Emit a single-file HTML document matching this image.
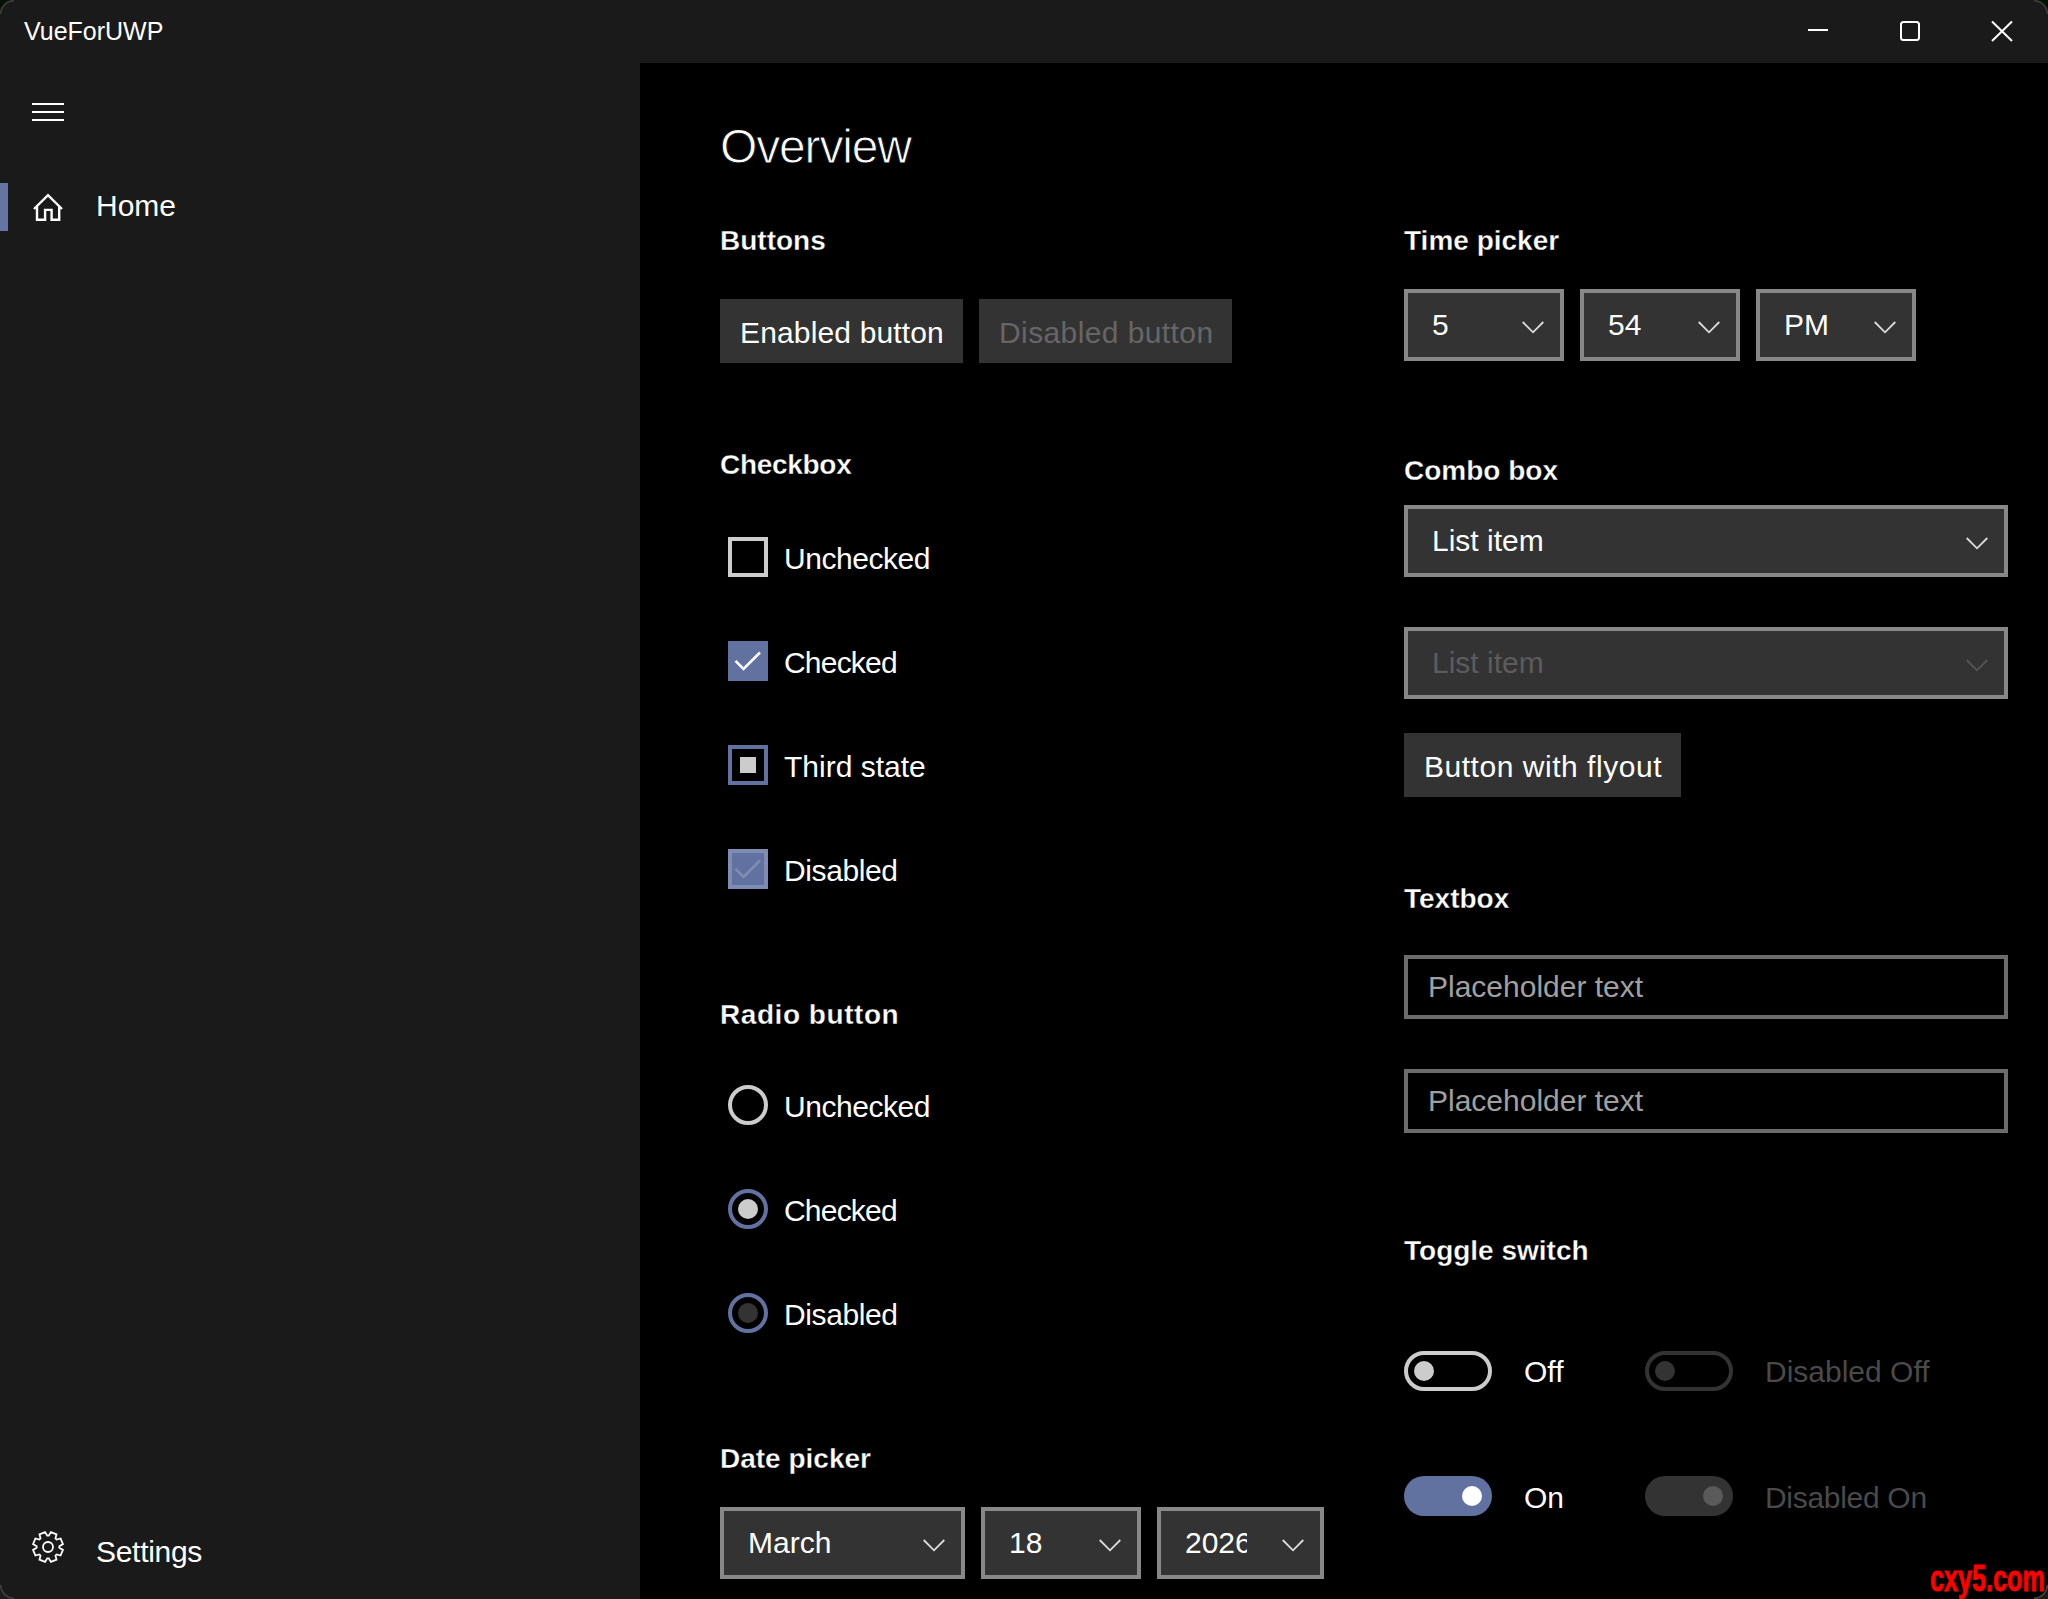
<!DOCTYPE html>
<html><head><meta charset="utf-8">
<style>
*{margin:0;padding:0;box-sizing:border-box}
html,body{width:2048px;height:1599px;overflow:hidden;background:#0a140a}
body{position:relative;font-family:"Liberation Sans",sans-serif;color:#fff}
#win{position:absolute;left:0;top:0;width:2048px;height:1599px;background:#1a1a1a;overflow:hidden}
.a{position:absolute;white-space:pre;line-height:1}
.t30{font-size:30px}
.h{font-size:28px;font-weight:700;-webkit-text-stroke:0.3px #000}
#content{position:absolute;left:640px;top:63px;width:1408px;height:1536px;background:#000}
.btn{position:absolute;background:#333;height:64px}
.pick{position:absolute;background:#333;border:4px solid #888;height:72px}
.chev{position:absolute;width:24px;height:14px}
.cb{position:absolute;width:40px;height:40px;left:728px}
.rb{position:absolute;width:40px;height:40px;left:728px;border-radius:50%;border:4px solid #ccc}
.tb{position:absolute;left:1404px;width:604px;height:64px;border:4px solid #6c6c6c;background:#000}
.tg{position:absolute;width:88px;height:40px;border-radius:20px}
.knob{position:absolute;width:20px;height:20px;border-radius:50%}
</style></head><body>
<div id="win">
  <!-- title bar -->
  <div class="a" style="left:24px;top:19px;font-size:25px">VueForUWP</div>
  <svg style="position:absolute;left:1790px;top:10px" width="240" height="44" viewBox="1790 10 240 44">
    <line x1="1808" y1="30" x2="1828" y2="30" stroke="#fff" stroke-width="2"/>
    <rect x="1901" y="22" width="18" height="18" rx="2.5" fill="none" stroke="#fff" stroke-width="2"/>
    <path d="M1992 21.5 L2012 41 M2012 21.5 L1992 41" stroke="#fff" stroke-width="2" fill="none"/>
  </svg>
  <!-- sidebar -->
  <svg style="position:absolute;left:28px;top:96px" width="40" height="32" viewBox="28 96 40 32">
    <path d="M32 104 H64 M32 112 H64 M32 120 H64" stroke="#fff" stroke-width="2" fill="none"/>
  </svg>
  <div style="position:absolute;left:0;top:183px;width:8px;height:48px;background:#6674a4"></div>
  <svg style="position:absolute;left:28px;top:186px" width="40" height="40" viewBox="28 186 40 40">
    <path d="M34 209 L48 195.2 L62 209" stroke="#fff" stroke-width="2.4" fill="none" stroke-linejoin="miter"/>
    <path d="M37 206.5 V219.8 H45.1 V209.9 H51.6 V219.8 H59.2 V206.5" stroke="#fff" stroke-width="2.4" fill="none"/>
  </svg>
  <div class="a t30" style="left:96px;top:191px">Home</div>
  <svg style="position:absolute;left:28px;top:1527px" width="40" height="40" viewBox="28 1527 40 40">
    <path d="M59.37 1547.80 L62.92 1549.90 L60.60 1555.50 L56.60 1554.48 L55.48 1555.60 L56.50 1559.60 L50.90 1561.92 L48.80 1558.37 L47.20 1558.37 L45.10 1561.92 L39.50 1559.60 L40.52 1555.60 L39.40 1554.48 L35.40 1555.50 L33.08 1549.90 L36.63 1547.80 L36.63 1546.20 L33.08 1544.10 L35.40 1538.50 L39.40 1539.52 L40.52 1538.40 L39.50 1534.40 L45.10 1532.08 L47.20 1535.63 L48.80 1535.63 L50.90 1532.08 L56.50 1534.40 L55.48 1538.40 L56.60 1539.52 L60.60 1538.50 L62.92 1544.10 L59.37 1546.20 Z" stroke="#fff" stroke-width="1.8" fill="none" stroke-linejoin="miter"/><circle cx="48" cy="1547" r="5" stroke="#fff" stroke-width="1.8" fill="none"/>
  </svg>
  <div class="a t30" style="left:96px;top:1537px;letter-spacing:-0.3px">Settings</div>

  <!-- content -->
  <div id="content"></div>
  <div class="a" style="left:720px;top:123px;font-size:48px;letter-spacing:-1.15px;-webkit-text-stroke:0.9px #000">Overview</div>

  <!-- Buttons -->
  <div class="a h" style="left:720px;top:227px">Buttons</div>
  <div class="btn" style="left:720px;top:299px;width:243px"></div>
  <div class="a t30" style="left:740px;top:318px;letter-spacing:0.15px">Enabled button</div>
  <div class="btn" style="left:979px;top:299px;width:253px"></div>
  <div class="a t30" style="left:999px;top:318px;color:#666;letter-spacing:0.4px">Disabled button</div>

  <!-- Checkbox -->
  <div class="a h" style="left:720px;top:451px;letter-spacing:-0.3px">Checkbox</div>
  <div class="cb" style="top:537px;border:4px solid #ccc"></div>
  <div class="a t30" style="left:784px;top:544px;letter-spacing:-0.45px">Unchecked</div>
  <div class="cb" style="top:641px;background:#6272a0">
    <svg width="40" height="40" viewBox="0 0 40 40" style="position:absolute;left:0;top:0"><path d="M7.5 19.8 L15.5 28 L32 11.5" stroke="#fff" stroke-width="2.6" fill="none"/></svg>
  </div>
  <div class="a t30" style="left:784px;top:648px;letter-spacing:-0.8px">Checked</div>
  <div class="cb" style="top:745px;border:4px solid #6272a0">
    <div style="position:absolute;left:8px;top:8px;width:16px;height:16px;background:#ccc"></div>
  </div>
  <div class="a t30" style="left:784px;top:752px">Third state</div>
  <div class="cb" style="top:849px;background:#6272a0;border:4px solid #7f8cb4">
    <svg width="40" height="40" viewBox="0 0 40 40" style="position:absolute;left:-4px;top:-4px"><path d="M7.5 19.8 L15.5 28 L32 11.5" stroke="#7f8cb4" stroke-width="2.6" fill="none"/></svg>
  </div>
  <div class="a t30" style="left:784px;top:856px;letter-spacing:-0.4px">Disabled</div>

  <!-- Radio -->
  <div class="a h" style="left:720px;top:1001px;letter-spacing:0.55px">Radio button</div>
  <div class="rb" style="top:1085px"></div>
  <div class="a t30" style="left:784px;top:1092px;letter-spacing:-0.45px">Unchecked</div>
  <div class="rb" style="top:1189px;border-color:#6272a0"><div class="knob" style="left:6px;top:6px;background:#ccc"></div></div>
  <div class="a t30" style="left:784px;top:1196px;letter-spacing:-0.8px">Checked</div>
  <div class="rb" style="top:1293px;border-color:#6272a0"><div class="knob" style="left:6px;top:6px;background:#333"></div></div>
  <div class="a t30" style="left:784px;top:1300px;letter-spacing:-0.4px">Disabled</div>

  <!-- Date picker -->
  <div class="a h" style="left:720px;top:1445px">Date picker</div>
  <div class="pick" style="left:720px;top:1507px;width:245px"></div>
  <div class="a t30" style="left:748px;top:1528px">March</div>
  <div class="pick" style="left:981px;top:1507px;width:160px"></div>
  <div class="a t30" style="left:1009px;top:1528px">18</div>
  <div class="pick" style="left:1157px;top:1507px;width:167px;overflow:hidden"></div>
  <div style="position:absolute;left:1161px;top:1511px;width:86px;height:64px;overflow:hidden">
    <div class="a t30" style="left:24px;top:17px">2026</div>
  </div>

  <!-- Time picker -->
  <div class="a h" style="left:1404px;top:227px">Time picker</div>
  <div class="pick" style="left:1404px;top:289px;width:160px"></div>
  <div class="a t30" style="left:1432px;top:310px">5</div>
  <div class="pick" style="left:1580px;top:289px;width:160px"></div>
  <div class="a t30" style="left:1608px;top:310px">54</div>
  <div class="pick" style="left:1756px;top:289px;width:160px"></div>
  <div class="a t30" style="left:1784px;top:310px">PM</div>

  <!-- Combo -->
  <div class="a h" style="left:1404px;top:457px">Combo box</div>
  <div class="pick" style="left:1404px;top:505px;width:604px"></div>
  <div class="a t30" style="left:1432px;top:526px">List item</div>
  <div class="pick" style="left:1404px;top:627px;width:604px"></div>
  <div class="a t30" style="left:1432px;top:648px;color:#5c5c5c">List item</div>
  <div class="btn" style="left:1404px;top:733px;width:277px"></div>
  <div class="a t30" style="left:1424px;top:752px;letter-spacing:0.53px">Button with flyout</div>

  <!-- Textbox -->
  <div class="a h" style="left:1404px;top:885px">Textbox</div>
  <div class="tb" style="top:955px"></div>
  <div class="a t30" style="left:1428px;top:972px;color:#a0a0a0">Placeholder text</div>
  <div class="tb" style="top:1069px"></div>
  <div class="a t30" style="left:1428px;top:1086px;color:#a0a0a0">Placeholder text</div>

  <!-- Toggle -->
  <div class="a h" style="left:1404px;top:1237px">Toggle switch</div>
  <div class="tg" style="left:1404px;top:1351px;border:4px solid #ccc"><div class="knob" style="left:6px;top:6px;background:#ccc"></div></div>
  <div class="a t30" style="left:1524px;top:1357px">Off</div>
  <div class="tg" style="left:1645px;top:1351px;border:4px solid #333"><div class="knob" style="left:6px;top:6px;background:#333"></div></div>
  <div class="a t30" style="left:1765px;top:1357px;color:#4a4a4a">Disabled Off</div>
  <div class="tg" style="left:1404px;top:1476px;background:#6272a0"><div class="knob" style="left:58px;top:10px;background:#fff"></div></div>
  <div class="a t30" style="left:1524px;top:1483px">On</div>
  <div class="tg" style="left:1645px;top:1476px;background:#333"><div class="knob" style="left:58px;top:10px;background:#5a5a5a"></div></div>
  <div class="a t30" style="left:1765px;top:1483px;color:#4a4a4a;letter-spacing:-0.3px">Disabled On</div>

  <svg class="chev" style="left:1521px;top:320px" width="24" height="14" viewBox="0 0 24 14"><path d="M1.7 2 L12 12.3 L22.3 2" stroke="#ddd" stroke-width="1.8" fill="none"/></svg>
  <svg class="chev" style="left:1697px;top:320px" width="24" height="14" viewBox="0 0 24 14"><path d="M1.7 2 L12 12.3 L22.3 2" stroke="#ddd" stroke-width="1.8" fill="none"/></svg>
  <svg class="chev" style="left:1873px;top:320px" width="24" height="14" viewBox="0 0 24 14"><path d="M1.7 2 L12 12.3 L22.3 2" stroke="#ddd" stroke-width="1.8" fill="none"/></svg>
  <svg class="chev" style="left:1965px;top:536px" width="24" height="14" viewBox="0 0 24 14"><path d="M1.7 2 L12 12.3 L22.3 2" stroke="#ddd" stroke-width="1.8" fill="none"/></svg>
  <svg class="chev" style="left:1965px;top:658px" width="24" height="14" viewBox="0 0 24 14"><path d="M1.7 2 L12 12.3 L22.3 2" stroke="#555" stroke-width="1.8" fill="none"/></svg>
  <svg class="chev" style="left:922px;top:1538px" width="24" height="14" viewBox="0 0 24 14"><path d="M1.7 2 L12 12.3 L22.3 2" stroke="#ddd" stroke-width="1.8" fill="none"/></svg>
  <svg class="chev" style="left:1098px;top:1538px" width="24" height="14" viewBox="0 0 24 14"><path d="M1.7 2 L12 12.3 L22.3 2" stroke="#ddd" stroke-width="1.8" fill="none"/></svg>
  <svg class="chev" style="left:1281px;top:1538px" width="24" height="14" viewBox="0 0 24 14"><path d="M1.7 2 L12 12.3 L22.3 2" stroke="#ddd" stroke-width="1.8" fill="none"/></svg>
  <div class="a" style="left:1930px;top:1561px;font-size:36px;font-weight:700;color:#f00;-webkit-text-stroke:0.8px #f00;transform:scaleX(0.7);transform-origin:0 0">cxy5.com</div>
  <svg style="position:absolute;left:0;top:0" width="20" height="20"><path d="M0 0 H14 A14 14 0 0 0 0 14 Z" fill="#061006"/><path d="M14 0.7 A13.3 13.3 0 0 0 0.7 14" stroke="#3a3f3a" stroke-width="1.7" fill="none"/></svg>
  <svg style="position:absolute;left:2028px;top:0" width="20" height="20"><path d="M20 0 H6 A14 14 0 0 1 20 14 Z" fill="#041004"/><path d="M6 0.7 A13.3 13.3 0 0 1 19.3 14" stroke="#3a3f3a" stroke-width="1.7" fill="none"/></svg>
  <svg style="position:absolute;left:0;top:1579px" width="20" height="20"><path d="M0 20 H14 A14 14 0 0 1 0 6 Z" fill="#1c1c1e"/><path d="M14 19.3 A13.3 13.3 0 0 1 0.7 6" stroke="#404040" stroke-width="1.7" fill="none"/></svg>
  <svg style="position:absolute;left:2028px;top:1579px" width="20" height="20"><path d="M20 20 H6 A14 14 0 0 0 20 6 Z" fill="#1a1a16"/><path d="M6 19.3 A13.3 13.3 0 0 0 19.3 6" stroke="#45453f" stroke-width="1.7" fill="none"/></svg>
</div>
</body></html>
